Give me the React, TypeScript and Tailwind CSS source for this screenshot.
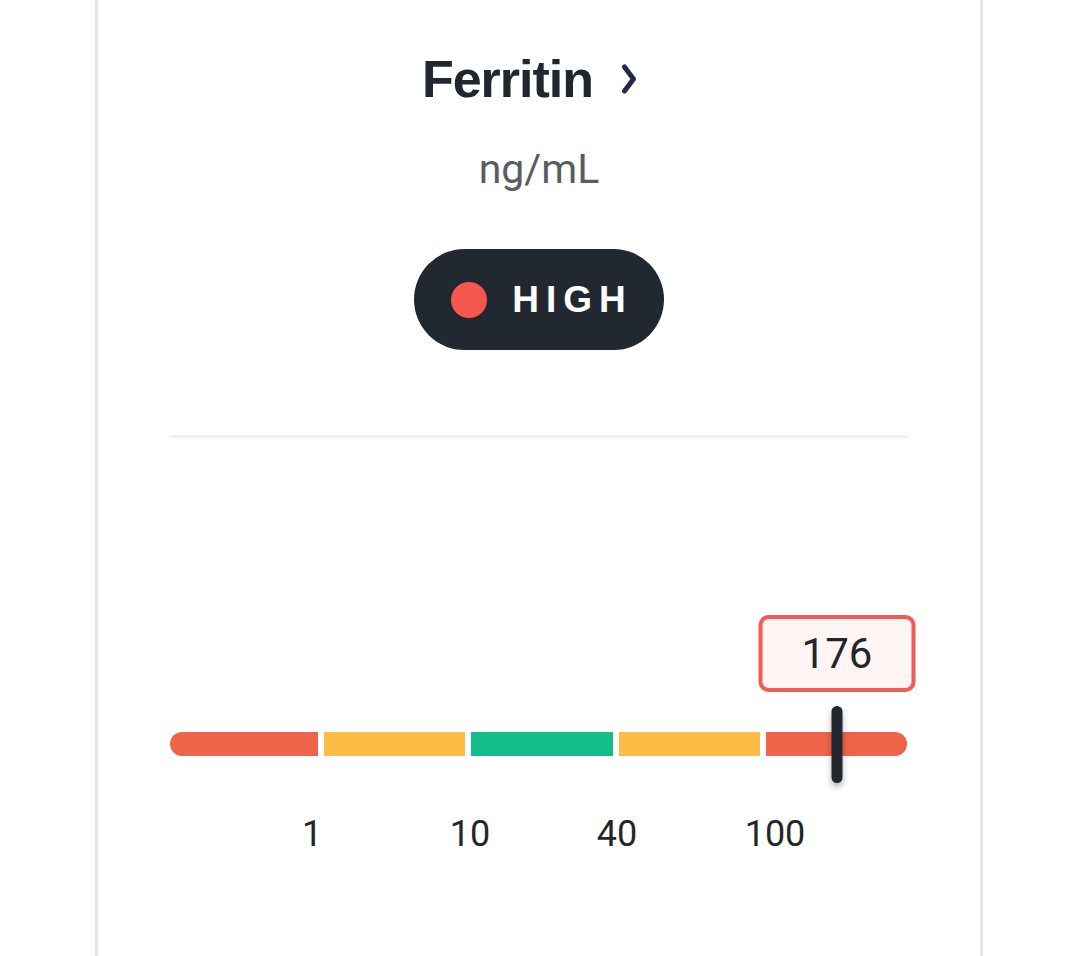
import React from 'react';

const SEGMENTS = [
    { width: 148, color: 'bg-[#f0634b]', round: 'rounded-l-full' },
    { width: 141, color: 'bg-[#fdbd45]', round: '' },
    { width: 142, color: 'bg-[#12bf8b]', round: '' },
    { width: 141, color: 'bg-[#fdbd45]', round: '' },
    { width: 141, color: 'bg-[#f0634b]', round: 'rounded-r-full' },
];

const TICKS = [
    { label: '1', x: 142 },
    { label: '10', x: 300 },
    { label: '40', x: 447 },
    { label: '100', x: 605 },
];

const ChevronRight = () => (
    <svg width="16" height="32" viewBox="0 0 16 32" fill="none">
        <path d="M3.5 4 L12.5 16 L3.5 28" stroke="#242a45" strokeWidth="5" strokeLinecap="round" strokeLinejoin="round" />
    </svg>
);

export default function App() {
    return (
        <div className="w-[1078px] h-[956px] bg-white flex justify-center overflow-hidden">
            <div className="w-[888px] h-full border-x-[3px] border-[#e6e6e6] px-[72px] flex flex-col items-center">
                <div className="mt-[48px] flex items-center gap-[28px] pr-[19px]">
                    <h2 className="font-['Liberation_Sans',Arial,sans-serif] font-bold text-[52px] leading-[62px] tracking-[-1px] text-[#22272d]">
                        Ferritin
                    </h2>
                    <ChevronRight />
                </div>

                <div className="mt-[35px] font-['Roboto',sans-serif] text-[41px] leading-[48px] text-[#595d62]">
                    ng/mL
                </div>

                <div className="mt-[56px] h-[101px] pl-[37px] pr-[31px] rounded-full bg-[#22282f] flex items-center gap-[25px]">
                    <span className="w-[36px] h-[36px] rounded-full bg-[#f6574f]" />
                    <span className="font-['Liberation_Sans',Arial,sans-serif] font-bold text-[37px] leading-none tracking-[7px] text-white">
                        HIGH
                    </span>
                </div>

                <div className="mt-[85px] w-full h-[3px] bg-[#f0f0f0]" />

                <div className="relative mt-[162px] w-full h-[260px]">
                    <div className="absolute left-[667px] top-[15px] -translate-x-1/2 w-[157px] h-[77px] rounded-[10px] border-[4px] border-[#f45b52] bg-[#fff5f4] flex items-center justify-center">
                        <span className="font-['Roboto',sans-serif] text-[42px] leading-none text-[#22262b]">176</span>
                    </div>

                    <div className="mt-[132px] flex gap-[6px] h-[24px]">
                        {SEGMENTS.map((s, i) => (
                            <div key={i} className={`h-full ${s.color} ${s.round}`} style={{ width: s.width }} />
                        ))}
                    </div>

                    <div className="absolute left-[667px] top-[106px] -translate-x-1/2 w-[11px] h-[77px] rounded-full bg-[#22282f] shadow-[0_4px_6px_rgba(0,0,0,0.3)]" />

                    {TICKS.map((t) => (
                        <span
                            key={t.label}
                            className="absolute top-[216px] -translate-x-1/2 font-['Roboto',sans-serif] text-[36px] leading-none text-[#22262b]"
                            style={{ left: t.x }}
                        >
                            {t.label}
                        </span>
                    ))}
                </div>
            </div>
        </div>
    );
}
